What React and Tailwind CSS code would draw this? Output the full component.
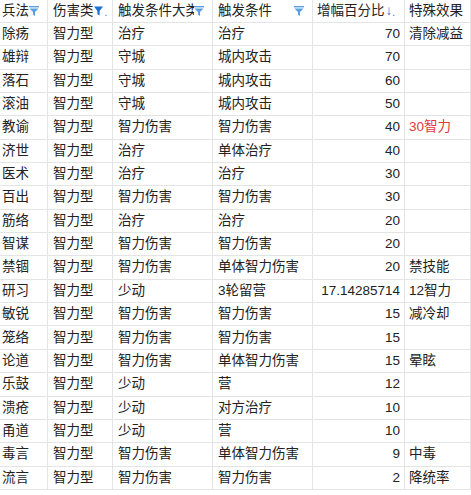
const rows = [
  ["除疡", "智力型", "治疗", "治疗", "70", "清除减益"],
  ["雄辩", "智力型", "守城", "城内攻击", "70", ""],
  ["落石", "智力型", "守城", "城内攻击", "60", ""],
  ["滚油", "智力型", "守城", "城内攻击", "50", ""],
  ["教谕", "智力型", "智力伤害", "智力伤害", "40", "30智力", true],
  ["济世", "智力型", "治疗", "单体治疗", "40", ""],
  ["医术", "智力型", "治疗", "治疗", "30", ""],
  ["百出", "智力型", "智力伤害", "智力伤害", "30", ""],
  ["筋络", "智力型", "治疗", "治疗", "20", ""],
  ["智谋", "智力型", "智力伤害", "智力伤害", "20", ""],
  ["禁锢", "智力型", "智力伤害", "单体智力伤害", "20", "禁技能"],
  ["研习", "智力型", "少动", "3轮留营", "17.14285714", "12智力"],
  ["敏锐", "智力型", "智力伤害", "智力伤害", "15", "减冷却"],
  ["笼络", "智力型", "智力伤害", "智力伤害", "15", ""],
  ["论道", "智力型", "智力伤害", "单体智力伤害", "15", "晕眩"],
  ["乐鼓", "智力型", "少动", "营", "12", ""],
  ["溃疮", "智力型", "少动", "对方治疗", "10", ""],
  ["甬道", "智力型", "少动", "营", "10", ""],
  ["毒言", "智力型", "智力伤害", "单体智力伤害", "9", "中毒"],
  ["流言", "智力型", "智力伤害", "智力伤害", "2", "降统率"],
];

function Funnel({ solid }) {
  if (solid) {
    return (
      <svg width="9" height="10" viewBox="0 0 9 10" className="shrink-0">
        <path d="M0 0.5h9L5.6 5v4.5L3.4 8.3V5z" fill="#1f6fd1" />
      </svg>
    );
  }
  return (
    <svg width="10" height="10" viewBox="0 0 10 10" className="shrink-0">
      <rect x="0" y="0" width="10" height="1.4" fill="#5a9fe0" />
      <path d="M0.5 2.6h9L6 6v4L4 8.8V6z" fill="#5a9fe0" />
    </svg>
  );
}

const cell = "border-r border-b border-[#e4e4e4] flex items-center overflow-hidden whitespace-nowrap";

export default function App() {
  return (
    <div
      className="w-[471px] h-[495px] overflow-hidden bg-white text-[#222] text-[13.5px]"
      style={{ fontFamily: '"Liberation Sans", "Noto Sans CJK SC", sans-serif' }}
    >
      <div className="grid grid-cols-[48px_65px_100px_100px_92px_66px]">
        <div className={`${cell} h-[23px] pl-[2px] pr-[8px] justify-between`}>
          <span>兵法</span>
          <Funnel />
        </div>
        <div className={`${cell} h-[23px] pl-[5px] pr-[6px]`}>
          <span className="flex-1">伤害类</span>
          <Funnel solid />
          <span className="text-[#1f6fd1] ml-[2px] text-[10px] leading-none mt-[4px]">.</span>
        </div>
        <div className={`${cell} h-[23px] pl-[5px] pr-[8px]`}>
          <span className="flex-1 min-w-0 overflow-hidden">触发条件大类</span>
          <Funnel />
        </div>
        <div className={`${cell} h-[23px] pl-[5px] pr-[8px] justify-between`}>
          <span>触发条件</span>
          <Funnel />
        </div>
        <div className={`${cell} h-[23px] pl-[4px] pr-[6px]`}>
          <span>增幅百分比</span>
          <span className="text-[#1f6fd1] font-bold ml-[1px]">↓</span>
          <span className="text-[#1f6fd1] text-[10px] leading-none mt-[4px]">.</span>
        </div>
        <div className={`${cell} h-[23px] pl-[4px]`}>
          <span>特殊效果</span>
        </div>

        {rows.map((r) => (
          <Row key={r[0]} r={r} />
        ))}
      </div>
    </div>
  );
}

function Row({ r }) {
  const h = "h-[23.35px]";
  return (
    <>
      <div className={`${cell} ${h} pl-[2px]`}>{r[0]}</div>
      <div className={`${cell} ${h} pl-[5px]`}>{r[1]}</div>
      <div className={`${cell} ${h} pl-[5px]`}>{r[2]}</div>
      <div className={`${cell} ${h} pl-[5px]`}>{r[3]}</div>
      <div className={`${cell} ${h} justify-end pr-[4px]`}>{r[4]}</div>
      <div className={`${cell} ${h} pl-[4px] ${r[6] ? "text-[#e0393b]" : ""}`}>{r[5]}</div>
    </>
  );
}
